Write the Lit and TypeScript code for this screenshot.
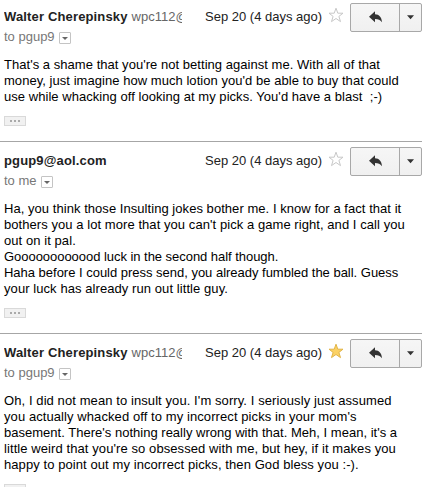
import { LitElement, html, css } from "lit";
import { customElement, property } from "lit/decorators.js";
import { classMap } from "lit/directives/class-map.js";

type Line = [text: string, spacing: number];

interface Message {
  name: string;
  email: string;
  to: string;
  starred: boolean;
  lines: Line[];
}

const MESSAGES: Message[] = [
  {
    name: "Walter Cherepinsky",
    email: "wpc112@",
    to: "to pgup9",
    starred: false,
    lines: [
      ["That's a shame that you're not betting against me. With all of that", 0.037],
      ["money, just imagine how much lotion you'd be able to buy that could", 0.045],
      ["use while whacking off looking at my picks. You'd have a blast\u00a0 ;-)", 0.046],
    ],
  },
  {
    name: "pgup9@aol.com",
    email: "",
    to: "to me",
    starred: false,
    lines: [
      ["Ha, you think those Insulting jokes bother me. I know for a fact that it", 0.048],
      ["bothers you a lot more that you can't pick a game right, and I call you", 0.063],
      ["out on it pal.", 0.07],
      ["Goooooooooood luck in the second half though.", -0.04],
      ["Haha before I could press send, you already fumbled the ball. Guess", -0.015],
      ["your luck has already run out little guy.", 0.075],
    ],
  },
  {
    name: "Walter Cherepinsky",
    email: "wpc112@",
    to: "to pgup9",
    starred: true,
    lines: [
      ["Oh, I did not mean to insult you. I'm sorry. I seriously just assumed", 0.087],
      ["you actually whacked off to my incorrect picks in your mom's", 0.083],
      ["basement. There's nothing really wrong with that. Meh, I mean, it's a", 0.015],
      ["little weird that you're so obsessed with me, but hey, if it makes you", 0.086],
      ["happy to point out my incorrect picks, then God bless you :-).", 0.08],
    ],
  },
];

@customElement("mail-message")
class MailMessage extends LitElement {
  @property({ attribute: false }) message!: Message;

  static styles = css`
    :host {
      display: block;
      width: 422px;
      box-sizing: border-box;
      border-top: 1px solid #a6a6a6;
      padding: 5px 0 15px;
      font: 13px/16px "Liberation Sans", Arial, sans-serif;
      color: #000;
    }
    .header {
      display: flex;
      height: 54px;
    }
    .sender {
      width: 178px;
      margin-left: 4px;
      padding-top: 6px;
    }
    .from {
      display: flex;
      overflow: hidden;
      white-space: pre;
      color: #666;
    }
    .name {
      font-weight: bold;
      color: #222;
      margin-right: 4px;
      letter-spacing: 0.15px;
    }
    .to {
      display: flex;
      margin-top: 4px;
      color: #777;
      white-space: pre;
    }
    .details {
      box-sizing: border-box;
      width: 12px;
      height: 12px;
      margin: 3px 0 0 4.5px;
      border: 1px solid #c4c4c4;
      border-radius: 1px;
    }
    svg {
      display: block;
    }
    .date {
      padding: 6px 0 0 23px;
      box-sizing: border-box;
      width: 146px;
      color: #222;
      white-space: pre;
    }
    .star {
      width: 16px;
      height: 16px;
      margin-top: 4px;
      fill: #fff;
      stroke: #c8c8c8;
    }
    .star.on {
      fill: #fbd164;
      stroke: #e2b548;
    }
    .actions {
      display: flex;
      box-sizing: border-box;
      width: 72px;
      height: 29px;
      margin-left: 6px;
      border: 1px solid #a8a8a8;
      border-radius: 2px;
      background: linear-gradient(#f6f6f6, #f0f0f0);
    }
    .reply {
      width: 48px;
      border-right: 1px solid #a8a8a8;
    }
    .more {
      width: 21px;
    }
    .line {
      height: 16px;
      margin-left: 4px;
      white-space: pre;
    }
    .trimmed {
      display: flex;
      justify-content: center;
      align-items: center;
      gap: 2px;
      box-sizing: border-box;
      width: 22px;
      height: 10px;
      margin: 11px 0 0 4px;
      border: 1px solid #d9d9d9;
      background: #f1f1f1;
    }
    .dot {
      width: 2px;
      height: 2px;
      background: #aaa;
    }
  `;

  render() {
    const m = this.message;
    return html`
      <div class="header">
        <div class="sender">
          <div class="from"><span class="name">${m.name}</span><span>${m.email}</span></div>
          <div class="to">
            <span>${m.to}</span>
            <span class="details"
              ><svg width="10" height="10" viewBox="0 0 10 10"><path d="M2 4h6L5 7z" fill="#666" /></svg
            ></span>
          </div>
        </div>
        <div class="date">Sep 20 (4 days ago)</div>
        <svg class=${classMap({ star: true, on: m.starred })} viewBox="0 0 16 16">
          <path d="M8 1.2L9.8 6.2H15L10.9 9.4L12.5 14.6L8 11.5L3.5 14.6L5.1 9.4L1 6.2H6.2Z" />
        </svg>
        <div class="actions">
          <div class="reply">
            <svg width="48" height="27" viewBox="0 0 48 27">
              <path d="M18 12.7L24 7.2V10.3C28.2 10.5 30.6 13.2 31 18.2C29.2 15.8 27.3 15 24 15V18.2Z" fill="#333" />
            </svg>
          </div>
          <div class="more">
            <svg width="21" height="27" viewBox="0 0 21 27"><path d="M7 11.2h7L10.5 15.2z" fill="#333" /></svg>
          </div>
        </div>
      </div>
      ${m.lines.map(([text, spacing]) => html`<div class="line" style="letter-spacing:${spacing}px">${text}</div>`)}
      <div class="trimmed"><i class="dot"></i><i class="dot"></i><i class="dot"></i></div>
    `;
  }
}

@customElement("app-root")
class AppRoot extends LitElement {
  static styles = css`
    :host {
      display: block;
      width: 429px;
      height: 487px;
      overflow: hidden;
      background: #fff;
    }
    .thread {
      display: flex;
      flex-direction: column;
      margin-top: -3px;
    }
  `;

  render() {
    return html`<div class="thread">
      ${MESSAGES.map((m) => html`<mail-message .message=${m}></mail-message>`)}
    </div>`;
  }
}
